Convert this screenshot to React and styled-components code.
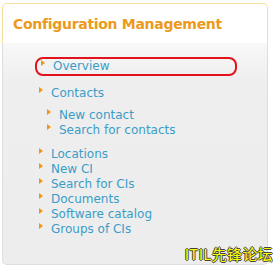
import React from "react";
import styled, { createGlobalStyle } from "styled-components";

const GlobalStyle = createGlobalStyle`
  body {
    margin: 0;
    background: #fff;
    font-family: "DejaVu Sans", Verdana, sans-serif;
  }
`;

const Page = styled.div`
  position: relative;
  width: 273px;
  height: 267px;
  padding: 3px 5px 2px 2px;
  box-sizing: border-box;
`;

const Panel = styled.div`
  display: flex;
  flex-direction: column;
  height: 100%;
`;

const Header = styled.div`
  height: 39px;
  display: flex;
  align-items: center;
  padding-left: 10px;
  background: #fff;
  border: 1px solid #f4e09a;
  border-bottom: none;
  border-radius: 5px 5px 0 0;
`;

const Title = styled.h2`
  margin: 0;
  font-size: 14px;
  font-weight: bold;
  letter-spacing: -0.3px;
  color: #ec9a1c;
`;

const Body = styled.div`
  flex: 1;
  padding: 14px 0 0 0;
  background: linear-gradient(#f8f8f8, #eeeeee 40px, #ededed);
  border: 1px solid #dedede;
  border-top: none;
  border-radius: 0 0 5px 5px;
`;

const List = styled.ul`
  list-style: none;
  margin: 0 0 ${(p) => p.gap ?? 9}px 0;
  padding: 0 0 0 ${(p) => p.indent || 35}px;
`;

const Item = styled.li`
  display: flex;
  align-items: center;
  height: 15px;
  font-size: 12px;
  line-height: 15px;
  color: #3a9dc8;
`;

const Marker = styled.span`
  width: 0;
  height: 0;
  border-top: 3px solid transparent;
  border-bottom: 3px solid transparent;
  border-left: 4px solid #f0941a;
  margin-right: 8px;
  align-self: flex-start;
  margin-top: 1px;
`;

const Highlight = styled.div`
  margin: 0 0 10px 32px;
  width: 202px;
  height: 19px;
  box-sizing: border-box;
  border: 2px solid #e2131c;
  border-radius: 8px;
  display: flex;
  align-items: center;
  padding-left: 4px;
`;

const Watermark = styled.div`
  position: absolute;
  right: 0;
  bottom: 5px;
  font-family: "Noto Sans CJK SC", "DejaVu Sans", sans-serif;
  font-size: 15px;
  line-height: 16px;
  letter-spacing: 0.3px;
  color: #ffff00;
  text-shadow: 1px 0 0 #444, -1px 0 0 #444, 0 1px 0 #444, 0 -1px 0 #444;
`;

const Entry = ({ children }) => (
  <Item>
    <Marker />
    {children}
  </Item>
);

export default function App() {
  return (
    <>
      <GlobalStyle />
      <Page>
        <Panel>
          <Header>
            <Title>Configuration Management</Title>
          </Header>
          <Body>
            <Highlight>
              <Entry>Overview</Entry>
            </Highlight>
            <List indent={36} gap={7}>
              <Entry>Contacts</Entry>
            </List>
            <List indent={44}>
              <Entry>New contact</Entry>
              <Entry>Search for contacts</Entry>
            </List>
            <List indent={36}>
              <Entry>Locations</Entry>
              <Entry>New CI</Entry>
              <Entry>Search for CIs</Entry>
              <Entry>Documents</Entry>
              <Entry>Software catalog</Entry>
              <Entry>Groups of CIs</Entry>
            </List>
          </Body>
        </Panel>
        <Watermark>ITIL先锋论坛</Watermark>
      </Page>
    </>
  );
}
